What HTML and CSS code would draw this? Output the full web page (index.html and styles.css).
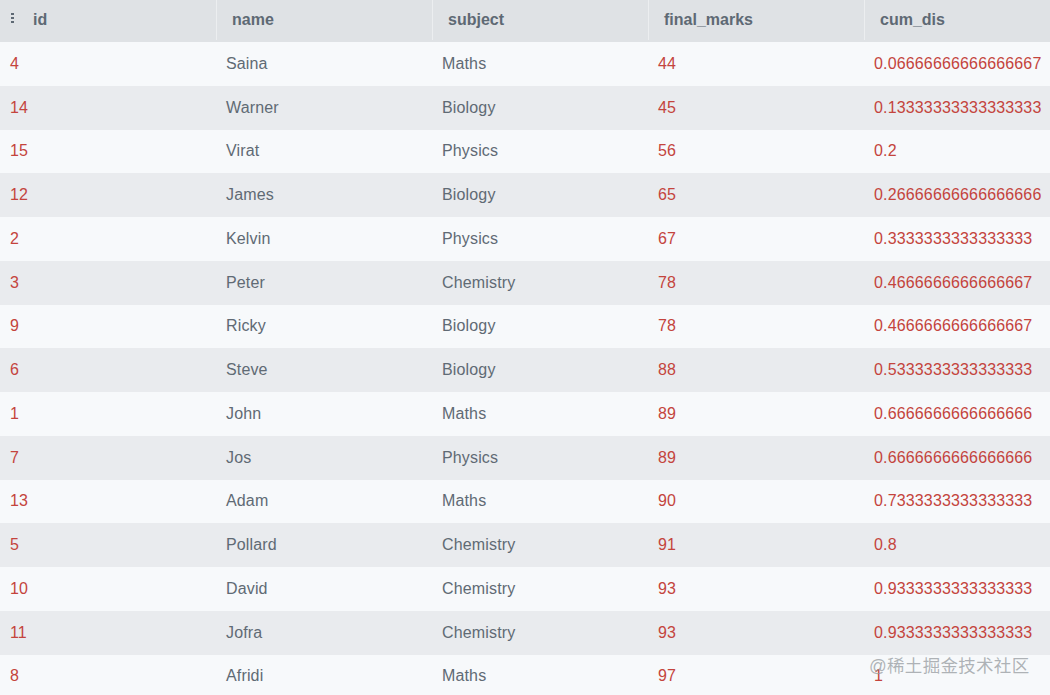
FILE: index.html
```html
<!DOCTYPE html>
<html>
<head>
<meta charset="utf-8">
<link rel="stylesheet" href="styles.css">
</head>
<body>
<div class="table">
  <div class="row head">
    <div class="cell first"><span class="dots"><i></i><i></i><i></i></span>id</div>
    <div class="cell">name</div>
    <div class="cell">subject</div>
    <div class="cell">final_marks</div>
    <div class="cell">cum_dis</div>
  </div>
  <div class="row"><div class="cell num">4</div><div class="cell">Saina</div><div class="cell">Maths</div><div class="cell num">44</div><div class="cell num">0.06666666666666667</div></div>
  <div class="row"><div class="cell num">14</div><div class="cell">Warner</div><div class="cell">Biology</div><div class="cell num">45</div><div class="cell num">0.13333333333333333</div></div>
  <div class="row"><div class="cell num">15</div><div class="cell">Virat</div><div class="cell">Physics</div><div class="cell num">56</div><div class="cell num">0.2</div></div>
  <div class="row"><div class="cell num">12</div><div class="cell">James</div><div class="cell">Biology</div><div class="cell num">65</div><div class="cell num">0.26666666666666666</div></div>
  <div class="row"><div class="cell num">2</div><div class="cell">Kelvin</div><div class="cell">Physics</div><div class="cell num">67</div><div class="cell num">0.3333333333333333</div></div>
  <div class="row"><div class="cell num">3</div><div class="cell">Peter</div><div class="cell">Chemistry</div><div class="cell num">78</div><div class="cell num">0.4666666666666667</div></div>
  <div class="row"><div class="cell num">9</div><div class="cell">Ricky</div><div class="cell">Biology</div><div class="cell num">78</div><div class="cell num">0.4666666666666667</div></div>
  <div class="row"><div class="cell num">6</div><div class="cell">Steve</div><div class="cell">Biology</div><div class="cell num">88</div><div class="cell num">0.5333333333333333</div></div>
  <div class="row"><div class="cell num">1</div><div class="cell">John</div><div class="cell">Maths</div><div class="cell num">89</div><div class="cell num">0.6666666666666666</div></div>
  <div class="row"><div class="cell num">7</div><div class="cell">Jos</div><div class="cell">Physics</div><div class="cell num">89</div><div class="cell num">0.6666666666666666</div></div>
  <div class="row"><div class="cell num">13</div><div class="cell">Adam</div><div class="cell">Maths</div><div class="cell num">90</div><div class="cell num">0.7333333333333333</div></div>
  <div class="row"><div class="cell num">5</div><div class="cell">Pollard</div><div class="cell">Chemistry</div><div class="cell num">91</div><div class="cell num">0.8</div></div>
  <div class="row"><div class="cell num">10</div><div class="cell">David</div><div class="cell">Chemistry</div><div class="cell num">93</div><div class="cell num">0.9333333333333333</div></div>
  <div class="row"><div class="cell num">11</div><div class="cell">Jofra</div><div class="cell">Chemistry</div><div class="cell num">93</div><div class="cell num">0.9333333333333333</div></div>
  <div class="row"><div class="cell num">8</div><div class="cell">Afridi</div><div class="cell">Maths</div><div class="cell num">97</div><div class="cell num">1</div></div>
  <div class="watermark">@稀土掘金技术社区</div>
</div>
</body>
</html>
```
FILE: styles.css
```css
html, body {
  margin: 0;
  padding: 0;
  background: #f7f9fb;
  overflow: hidden;
}
body {
  width: 1050px;
  height: 695px;
  font-family: "Liberation Sans", Arial, "Noto Sans CJK SC", sans-serif;
  font-size: 16px;
  color: #606a74;
}
.table {
  position: relative;
  width: 1050px;
  height: 695px;
  overflow: hidden;
}
.row {
  display: grid;
  grid-template-columns: 216px 216px 216px 216px 216px;
  height: 43.75px;
  align-items: center;
  background: #f7f9fb;
  letter-spacing: 0.15px;
}
.row:nth-child(odd) {
  background: #e9ebee;
}
.row.head {
  height: 42px;
  background: #dfe2e5;
  font-weight: bold;
  color: #5e6974;
  letter-spacing: 0;
}
.cell {
  padding-left: 10px;
  white-space: nowrap;
  height: 100%;
  display: flex;
  align-items: center;
}
.head .cell {
  padding-left: 15px;
  border-left: 1px solid #eceef0;
  height: 40px;
  align-self: start;
}
.head .cell.first {
  border-left: none;
  padding-left: 11px;
}
.num {
  color: #c4443d;
}
.dots {
  display: inline-flex;
  flex-direction: column;
  gap: 1.5px;
  margin-right: 19px;
  margin-top: -4px;
}
.dots i {
  display: block;
  width: 3px;
  height: 2.5px;
  background: #5e6974;
}
.watermark {
  position: absolute;
  left: 869px;
  top: 652px;
  font-size: 17.5px;
  color: rgba(150, 155, 160, 0.75);
  font-weight: normal;
  letter-spacing: 0.3px;
}
```
